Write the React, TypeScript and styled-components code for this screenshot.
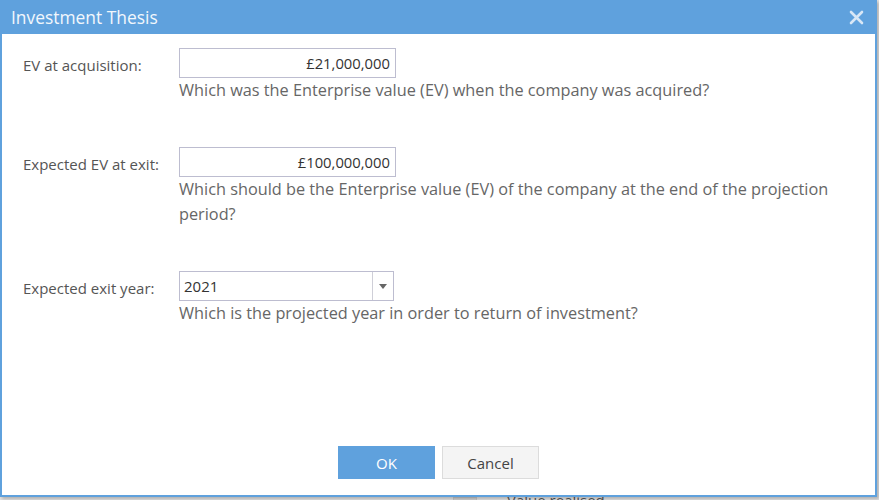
import React from 'react';
import styled, { createGlobalStyle } from 'styled-components';

const GlobalStyle = createGlobalStyle`
    html, body {
        margin: 0;
        padding: 0;
        overflow: hidden;
    }
    body {
        font-family: 'Open Sans', 'Liberation Sans', sans-serif;
    }
    * {
        box-sizing: border-box;
    }
`

const Page = styled.div`
    position: relative;
    width: 879px;
    height: 500px;
    overflow: hidden;
    background: #e2e2e2;
`

const UnderlayRow = styled.div`
    display: flex;
    align-items: flex-start;
    gap: 30px;
    padding: 497px 0 0 453px;
`

const UnderlayBox = styled.div`
    width: 24px;
    height: 20px;
    background: #cfcfcf;
    border: 1px solid #c4c4c4;
`

const UnderlayText = styled.span`
    font-size: 15px;
    line-height: 15px;
    margin-top: -4px;
    color: #555;
`

const Dialog = styled.div`
    position: absolute;
    left: 0;
    top: 0;
    width: 877px;
    height: 497px;
    display: flex;
    flex-direction: column;
    background: #fff;
    border: 2px solid #5fa1dd;
    box-shadow: 2px 2px 3px rgba(0, 0, 0, 0.22);
`

const TitleBar = styled.div`
    height: 34px;
    flex-shrink: 0;
    display: flex;
    align-items: center;
    justify-content: space-between;
    padding: 0 10px 0 9px;
    margin-top: -2px;
    background: #5fa1dd;
`

const Title = styled.h1`
    margin: 0;
    font-size: 17.4px;
    font-weight: 400;
    color: #f2f7fc;
    line-height: 34px;
`

const CloseButton = styled.button`
    display: flex;
    align-items: center;
    justify-content: center;
    width: 18px;
    height: 18px;
    padding: 0;
    border: none;
    background: transparent;
    cursor: pointer;
`

const Body = styled.div`
    flex: 1;
    display: flex;
    flex-direction: column;
    gap: 44px;
    padding: 14px 21px 0 21px;
`

const FieldRow = styled.div`
    display: grid;
    grid-template-columns: 156px 1fr;
`

const Label = styled.label`
    padding-top: 5px;
    font-size: 15px;
    line-height: 24px;
    color: #555;
`

const Control = styled.div`
    display: flex;
    flex-direction: column;
    align-items: flex-start;
`

const MoneyInput = styled.input`
    width: 217px;
    height: 30px;
    padding: 0 5px;
    border: 1px solid #bdbdd0;
    border-radius: 0;
    outline: none;
    font-family: inherit;
    font-size: 14.8px;
    color: #333;
    text-align: right;
    background: #fff;
`

const Select = styled.div`
    width: 215px;
    height: 30px;
    display: flex;
    border: 1px solid #bdbdd0;
    background: #fff;
`

const SelectValue = styled.span`
    flex: 1;
    padding-left: 4px;
    font-size: 15px;
    line-height: 28px;
    color: #333;
`

const SelectArrow = styled.span`
    width: 21px;
    display: flex;
    align-items: center;
    justify-content: center;
    border-left: 1px solid #cfcfd8;
`

const Help = styled.p`
    margin: 0;
    font-size: 16.3px;
    line-height: 25px;
    color: #666;
`

const Footer = styled.div`
    display: flex;
    justify-content: center;
    gap: 7px;
    padding-bottom: 16px;
`

const Button = styled.button<{ primary?: boolean }>`
    width: 97px;
    height: 33px;
    font-family: inherit;
    font-size: 15px;
    cursor: pointer;
    border: 1px solid ${( props ) => props.primary ? '#5fa1dd' : '#dcdcdc'};
    background: ${( props ) => props.primary ? '#5fa1dd' : '#f4f4f4'};
    color: ${( props ) => props.primary ? '#fff' : '#444'};
`

const fields = [
    {
        label: 'EV at acquisition:',
        value: '£21,000,000',
        help: 'Which was the Enterprise value (EV) when the company was acquired?',
    },
    {
        label: 'Expected EV at exit:',
        value: '£100,000,000',
        help: 'Which should be the Enterprise value (EV) of the company at the end of the projection period?',
    },
]

function App(): JSX.Element {
    return (
        <Page>
            <GlobalStyle/>
            <UnderlayRow>
                <UnderlayBox/>
                <UnderlayText>Value realised</UnderlayText>
            </UnderlayRow>
            <Dialog>
                <TitleBar>
                    <Title>Investment Thesis</Title>
                    <CloseButton type='button' aria-label='close'>
                        <svg width='15' height='15' viewBox='0 0 15 15'>
                            <path d='M2 2 L13 13 M13 2 L2 13' stroke='#d8e7f6' strokeWidth='2.6'
                                  strokeLinecap='round'/>
                        </svg>
                    </CloseButton>
                </TitleBar>
                <Body>
                    {fields.map( ( field ) => (
                        <FieldRow key={field.label}>
                            <Label>{field.label}</Label>
                            <Control>
                                <MoneyInput readOnly value={field.value}/>
                                <Help>{field.help}</Help>
                            </Control>
                        </FieldRow>
                    ) )}
                    <FieldRow>
                        <Label>Expected exit year:</Label>
                        <Control>
                            <Select>
                                <SelectValue>2021</SelectValue>
                                <SelectArrow>
                                    <svg width='8' height='5' viewBox='0 0 8 5'>
                                        <path d='M0 0 L8 0 L4 5 Z' fill='#666'/>
                                    </svg>
                                </SelectArrow>
                            </Select>
                            <Help>Which is the projected year in order to return of investment?</Help>
                        </Control>
                    </FieldRow>
                </Body>
                <Footer>
                    <Button primary type='button'>OK</Button>
                    <Button type='button'>Cancel</Button>
                </Footer>
            </Dialog>
        </Page>
    )
}

export default App;
